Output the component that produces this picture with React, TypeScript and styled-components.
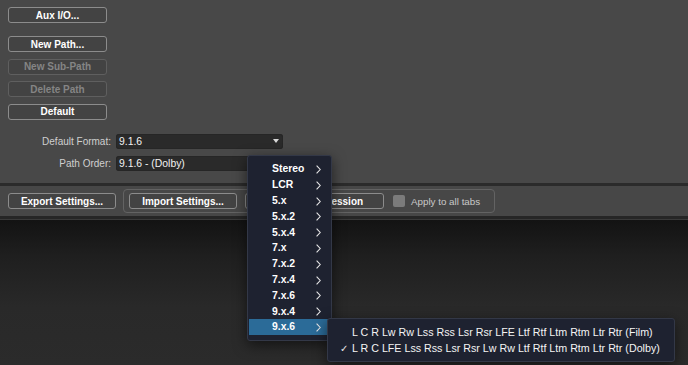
import styled, { createGlobalStyle } from 'styled-components';

const GlobalStyle = createGlobalStyle`
  html, body {
    margin: 0;
    padding: 0;
    height: 100%;
    overflow: hidden;
    background: #202020;
  }
  #root {
    height: 100%;
  }
  * {
    box-sizing: border-box;
  }
`;

const Page = styled.div`
  position: relative;
  height: 365px;
  width: 688px;
  display: flex;
  flex-direction: column;
  font-family: 'Liberation Sans', Arial, sans-serif;
  font-size: 10px;
  color: #fff;
`;

const TopPanel = styled.div`
  height: 183px;
  background: #484848;
  padding: 7px 0 0 8px;
  display: flex;
  flex-direction: column;
`;

const ButtonStack = styled.div`
  display: flex;
  flex-direction: column;
  gap: 6.5px;
  width: 99px;
`;

const Button = styled.div<{ $disabled?: boolean; $width?: number; $gapTop?: number }>`
  height: 16px;
  width: ${(p) => (p.$width ? `${p.$width}px` : '100%')};
  margin-top: ${(p) => p.$gapTop || 0}px;
  border: 1px solid ${(p) => (p.$disabled ? '#5f5f5f' : '#8c8c8c')};
  border-radius: 3px;
  background: #434343;
  color: ${(p) => (p.$disabled ? '#858585' : '#ffffff')};
  font-weight: bold;
  font-size: 10px;
  display: flex;
  align-items: center;
  justify-content: center;
  white-space: nowrap;
  overflow: hidden;
  flex-shrink: 0;
`;

const Form = styled.div`
  margin-top: 14px;
  display: flex;
  flex-direction: column;
  gap: 7px;
`;

const FormRow = styled.div`
  display: flex;
  align-items: center;
  height: 15px;
`;

const Label = styled.div`
  width: 108px;
  text-align: right;
  color: #cfcfcf;
  font-size: 10px;
  padding-right: 5px;
`;

const Select = styled.div`
  position: relative;
  width: 167px;
  height: 15px;
  background: #2a2a2a;
  border-radius: 3px;
  box-shadow: inset 0 0 0 1px #262626;
  display: flex;
  align-items: center;
  padding-left: 3px;
  color: #f2f2f2;
  font-size: 10.4px;
`;

const Caret = styled.div`
  position: absolute;
  right: 4px;
  top: 5px;
  width: 0;
  height: 0;
  border-left: 3.5px solid transparent;
  border-right: 3.5px solid transparent;
  border-top: 4px solid #d8d8d8;
`;

const Divider = styled.div<{ $color: string; $h: number }>`
  height: ${(p) => p.$h}px;
  background: ${(p) => p.$color};
`;

const BottomBar = styled.div`
  height: 30px;
  background: #474747;
  display: flex;
  align-items: center;
  padding-left: 8px;
  gap: 7px;
`;

const Group = styled.div`
  height: 24px;
  border: 1px solid #636363;
  border-radius: 4px;
  display: flex;
  align-items: center;
  padding: 0 0 0 5px;
  width: 372px;
`;

const Check = styled.div`
  width: 12px;
  height: 12px;
  background: #7b7b7b;
  border-radius: 2px;
  margin-left: 9px;
`;

const CheckLabel = styled.span`
  margin-left: 6px;
  color: #c9c9c9;
  font-size: 9.8px;
`;

const Canvas = styled.div`
  flex: 1;
  background: linear-gradient(180deg, #131313 0%, #1f1f1f 25%, #292929 60%, #2b2b2b 100%);
`;

const Menu = styled.div`
  position: absolute;
  left: 247px;
  top: 155px;
  width: 85px;
  padding: 5px 1px;
  background: #1e2230;
  border: 1px solid #333847;
  border-radius: 3px;
  box-shadow: 0 4px 14px rgba(0, 0, 0, 0.55);
  z-index: 2;
`;

const MenuItem = styled.div<{ $active?: boolean }>`
  height: 15.8px;
  display: flex;
  align-items: center;
  padding-left: 23px;
  position: relative;
  background: ${(p) => (p.$active ? '#2b6b98' : 'transparent')};
  color: #ffffff;
  font-weight: bold;
  font-size: 10.4px;
`;

const Chevron = styled.svg`
  position: absolute;
  left: 67px;
  top: 4px;
`;

const SubMenu = styled.div`
  position: absolute;
  left: 327px;
  top: 318px;
  width: 348px;
  padding: 5px 1px;
  background: #1e2230;
  border: 1px solid #333847;
  border-radius: 3px;
  box-shadow: 0 4px 14px rgba(0, 0, 0, 0.55);
  z-index: 3;
`;

const SubItem = styled.div`
  height: 16px;
  display: flex;
  align-items: center;
  color: #f4f4f4;
  font-size: 10.7px;
  white-space: nowrap;
`;

const Tick = styled.span`
  width: 23px;
  padding-left: 11px;
  color: #e8e8e8;
  font-size: 10px;
`;

const formats = ['Stereo', 'LCR', '5.x', '5.x.2', '5.x.4', '7.x', '7.x.2', '7.x.4', '7.x.6', '9.x.4', '9.x.6'];

export default function App() {
  return (
    <>
      <GlobalStyle />
      <Page>
        <TopPanel>
          <ButtonStack>
            <Button>Aux I/O...</Button>
            <Button $gapTop={6.5}>New Path...</Button>
            <Button $disabled>New Sub-Path</Button>
            <Button $disabled>Delete Path</Button>
            <Button>Default</Button>
          </ButtonStack>
          <Form>
            <FormRow>
              <Label>Default Format:</Label>
              <Select>
                9.1.6
                <Caret />
              </Select>
            </FormRow>
            <FormRow>
              <Label>Path Order:</Label>
              <Select>9.1.6 - (Dolby)</Select>
            </FormRow>
          </Form>
        </TopPanel>
        <Divider $color="#2b2b2b" $h={3} />
        <BottomBar>
          <Button $width={108}>Export Settings...</Button>
          <Group>
            <Button $width={108}>Import Settings...</Button>
            <Button $width={139} style={{ marginLeft: 8 }}>Import from Session</Button>
            <Check />
            <CheckLabel>Apply to all tabs</CheckLabel>
          </Group>
        </BottomBar>
        <Divider $color="#262626" $h={3} />
        <Divider $color="#3a3a3a" $h={1} />
        <Canvas />
        <Menu>
          {formats.map((f) => (
            <MenuItem key={f} $active={f === '9.x.6'}>
              {f}
              <Chevron width="5" height="9" viewBox="0 0 5 9">
                <polyline points="0.6,0.6 4.2,4.5 0.6,8.4" fill="none" stroke="#e6e6e6" strokeWidth="1.1" />
              </Chevron>
            </MenuItem>
          ))}
        </Menu>
        <SubMenu>
          <SubItem>
            <Tick />
            L C R Lw Rw Lss Rss Lsr Rsr LFE Ltf Rtf Ltm Rtm Ltr Rtr (Film)
          </SubItem>
          <SubItem>
            <Tick>✓</Tick>
            L R C LFE Lss Rss Lsr Rsr Lw Rw Ltf Rtf Ltm Rtm Ltr Rtr (Dolby)
          </SubItem>
        </SubMenu>
      </Page>
    </>
  );
}
